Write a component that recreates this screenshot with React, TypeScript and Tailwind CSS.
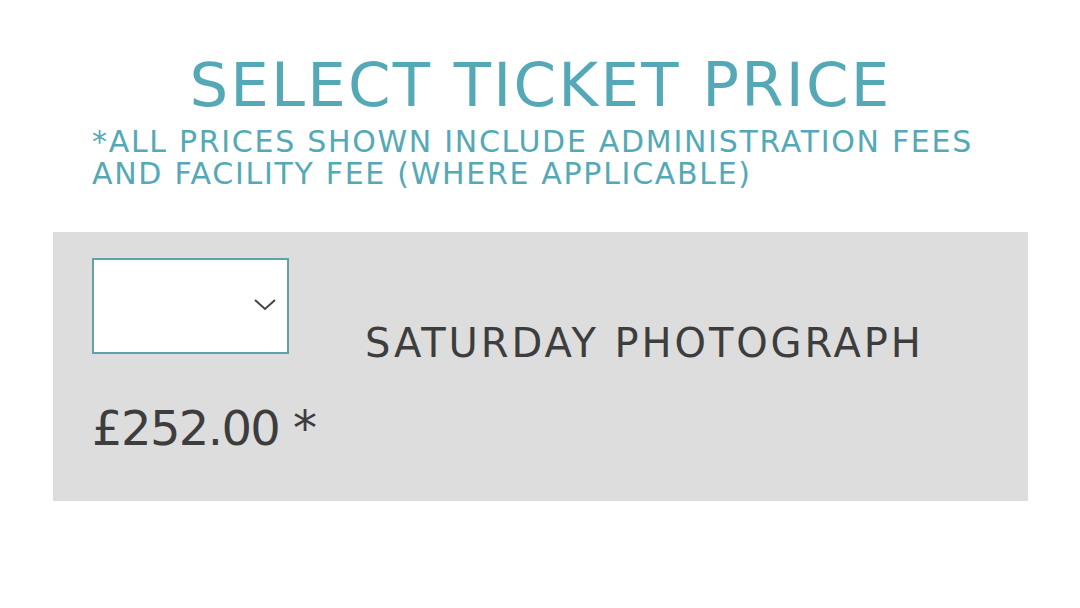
export default function App() {
  return (
    <div className="w-[1080px] h-[608px] bg-white font-['DejaVu_Sans',sans-serif]">
      <div className="ml-[53px] w-[975px] pt-[50px]">
        <div className="px-[39px]">
          <h1 className="text-center text-[61px] leading-[70px] text-[#55a9b7] tracking-[2.2px]">
            SELECT TICKET PRICE
          </h1>
          <p className="mt-[6px] text-[30px] leading-[32px] text-[#55a9b7] tracking-[1.7px]">
            *ALL PRICES SHOWN INCLUDE ADMINISTRATION FEES AND FACILITY FEE (WHERE APPLICABLE)
          </p>
        </div>

        <div className="mt-[42px] h-[269px] bg-[#dddddd] px-[39px] pt-[26px]">
          <div className="flex items-start">
            <div className="relative w-[197px] h-[96px] bg-white border-2 border-[#5fa2ab]">
              <svg
                className="absolute right-[10px] top-[38px]"
                width="24"
                height="14"
                viewBox="0 0 24 14"
                fill="none"
                stroke="#444"
                strokeWidth="2"
              >
                <path d="M2 2 L12 11 L22 2" />
              </svg>
            </div>
            <div className="ml-[76px] mt-[61px] text-[40px] leading-[48px] text-[#3d3d3d] tracking-[2.9px]">
              SATURDAY PHOTOGRAPH
            </div>
          </div>
          <div className="mt-[31px] text-[48px] leading-[60px] text-[#3d3d3d] tracking-[-1.6px]">£252.00 *</div>
        </div>
      </div>
    </div>
  )
}
